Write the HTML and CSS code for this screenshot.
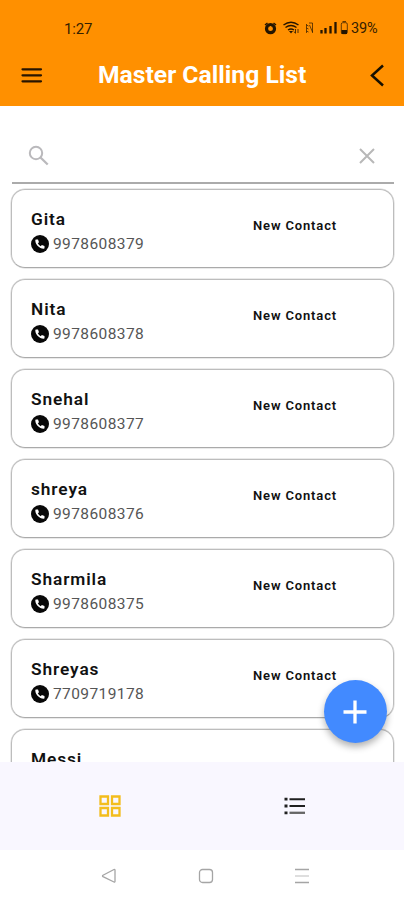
FILE: index.html
```html
<!DOCTYPE html>
<html lang="en">
<head>
<meta charset="utf-8">
<title>Master Calling List</title>
<link rel="stylesheet" href="styles.css">
</head>
<body>
<svg class="defs" aria-hidden="true">
  <symbol id="phone" viewBox="0 0 18 18">
    <circle cx="9" cy="9" r="9" fill="#080808"/>
    <path d="M5 4.500h2l1 2.700-1.200 1.100q1 2 2.900 2.900l1.200-1.200 2.600 1v2q0 .7-.8.7C8.100 13.500 4.400 9.800 4.300 5.300q0-.8.7-.8Z" fill="#fff"/>
  </symbol>
</svg>
<div class="app">
  <header>
    <div class="status">
      <span class="time">1:27</span>
      <svg width="83" height="16" viewBox="264 20 83 16" fill="none" stroke="#241500">
        <circle cx="270.500" cy="28.700" r="4" stroke-width="3.200"/>
        <path d="m265 25 2.500-2m6.000 0 2.500 2" stroke-width="1.500"/>
        <path d="M270.500 26v3h2" stroke-width="1" stroke="#ff9000"/>
        <path d="M283.500 25q7.500-5.500 15 0M285.500 27.500q5.500-4 11 0M288 30q3-2 6 0" stroke-width="1.400"/>
        <path d="m289 31 2 2.500 2-2.500Z" fill="#241500" stroke="none"/>
        <path d="M295.500 29v4m-1.500-1.500 1.500 2M298 33v-4" stroke-width=".8"/>
        <path d="M306.500 24v9m0-8 2 1m-2 2 2 1m-2 2 2 1M309 23h3.500v10m-3-8 3 7" stroke-width=".9" opacity=".75"/>
        <path d="M321.500 30v3.500M325.500 28v5.500M330.500 26v7.500M335.500 22v11.500" stroke-width="2.300"/>
        <rect x="341.300" y="22.700" width="6" height="11" rx="1.500" opacity=".7"/>
        <path d="M342.500 21.500h3.500" opacity=".7"/>
        <path d="M341.500 30h5.500v4h-5.500z" fill="#241500" stroke="none"/>
      </svg>
      <span class="battery">39%</span>
    </div>
    <div class="bar">
      <svg width="22" height="16" viewBox="0 0 22 16"><path d="M1.500 1.300H20M1.500 7.300H20M1.500 13.300H20" stroke="#281500" stroke-width="2.200" stroke-linecap="round"/></svg>
      <h1>Master Calling List</h1>
      <svg class="back" width="16" height="24" viewBox="0 0 16 24"><path d="M14 1.500 3 11.500l11 10" fill="none" stroke="#171000" stroke-width="2.500"/></svg>
    </div>
  </header>
  <div class="search">
    <svg width="22" height="22" viewBox="0 0 22 22" fill="none" stroke="#bab9bc"><circle cx="8" cy="8" r="6.200" stroke-width="2"/><path d="m12.500 12.500 7.200 7" stroke-width="2.300"/></svg>
    <svg width="18" height="18" viewBox="0 0 18 18"><path d="m2 2 14 14M16 2 2 16" stroke="#b8b8b8" stroke-width="2"/></svg>
  </div>
  <main>
    <article><div><h2>Gita</h2><p><svg><use href="#phone"/></svg>9978608379</p></div><span class="tag">New Contact</span></article>
    <article><div><h2>Nita</h2><p><svg><use href="#phone"/></svg>9978608378</p></div><span class="tag">New Contact</span></article>
    <article><div><h2>Snehal</h2><p><svg><use href="#phone"/></svg>9978608377</p></div><span class="tag">New Contact</span></article>
    <article><div><h2>shreya</h2><p><svg><use href="#phone"/></svg>9978608376</p></div><span class="tag">New Contact</span></article>
    <article><div><h2>Sharmila</h2><p><svg><use href="#phone"/></svg>9978608375</p></div><span class="tag">New Contact</span></article>
    <article><div><h2>Shreyas</h2><p><svg><use href="#phone"/></svg>7709719178</p></div><span class="tag">New Contact</span></article>
    <article><div><h2>Messi</h2></div></article>
  </main>
  <button class="fab" aria-label="Add contact"><svg width="24" height="24" viewBox="0 0 24 24"><path d="M12 .5v23M.5 12h23" stroke="#fff" stroke-width="3.300"/></svg></button>
  <nav class="tabs">
    <svg width="22" height="22" viewBox="0 0 22 22" fill="none" stroke="#f3bd1d" stroke-width="2.300"><path d="M1.500 1.500h7.500v7.500H1.500zM13 1.500h7.500v7.500H13zM1.500 13h7.500v7.500H1.500zM13 13h7.500v7.500H13z"/></svg>
    <svg width="22" height="20" viewBox="0 0 22 20" stroke="#202020"><path d="M.5 3.200h3M.5 10h3M.5 16.800h3" stroke-width="2.800"/><path d="M5.500 3.200H21M5.500 10H21" stroke-width="2.100"/><path d="M5.500 16.800H21" stroke="#666" stroke-width="2.300"/></svg>
  </nav>
  <nav class="system">
    <svg width="16" height="16" viewBox="0 0 16 16"><path d="M13 1.500 2 7.200q-1 .7 0 1.400L13 14q1 .5 1-.7V2.200q0-1.100-1-.7Z"/></svg>
    <svg width="16" height="16" viewBox="0 0 16 16"><rect x="1.500" y="1.500" width="13" height="13" rx="3"/></svg>
    <svg width="16" height="16" viewBox="0 0 16 16"><path d="M1 1.500h14M1 14.500h14"/><path d="M1 8h14" stroke="#ccc"/></svg>
  </nav>
</div>
</body>
</html>
```
FILE: styles.css
```css
* { box-sizing: border-box; }
body { margin: 0; background: #fff; font-family: Roboto, sans-serif; color: #111; }
svg { display: block; flex: none; }
.defs { position: absolute; width: 0; height: 0; }
.app { position: relative; width: 404px; height: 900px; display: flex; flex-direction: column; overflow: hidden; }
header { height: 106px; background: #ff9000; flex: none; }
.status { height: 40px; padding: 17px 26px 0 64px; display: flex; align-items: center; color: #352000; font-size: 15px; }
.time { margin-right: auto; letter-spacing: -.2px; }
.battery { width: 27px; margin-left: 4px; font-size: 14.500px; letter-spacing: -.1px; }
.status svg { overflow: visible; margin-top: -1px; }
.bar { height: 66px; padding: 4px 19px 0 21px; display: flex; align-items: center; }
h1 { margin: -1px auto 0 55px; color: #fff; font-size: 24.700px; line-height: 30px; font-weight: 700; white-space: nowrap; }
.bar svg { margin-top: 1px; }
.search { height: 78px; margin: 0 10px 0 12px; padding: 24px 18px 0 16px; border-bottom: 2px solid #ababab; display: flex; align-items: center; justify-content: space-between; flex: none; }
main { height: 578px; padding: 5px 10px 0 11px; display: flex; flex-direction: column; gap: 11px; overflow: hidden; flex: none; }
article { height: 79px; flex: none; border: 1px solid #bdbdbd; border-bottom-color: #aaa; box-shadow: 0 0 0 .5px #d5d5d5; border-radius: 14px; padding: 18px 0 0 19px; display: flex; }
article div { width: 222px; }
h2 { margin: 0; font-size: 17.300px; line-height: 22px; font-weight: 600; letter-spacing: .9px; }
article p { margin: 3px 0 0; display: flex; align-items: center; gap: 4px; height: 22px; font-size: 15.500px; letter-spacing: .4px; color: #555; }
article p svg { width: 18px; height: 18px; }
.tag { font-size: 13px; line-height: 18px; font-weight: 600; letter-spacing: .85px; padding-top: 9px; }
.fab { position: absolute; left: 323.500px; top: 680px; width: 63px; height: 63px; border: 0; padding: 0; border-radius: 50%; background: #428aff; display: grid; place-items: center; box-shadow: 0 4px 7px rgb(0 0 0 / 30%); }
.tabs { height: 88px; padding: 0 98px 0 99px; background: #f9f7ff; display: flex; align-items: center; justify-content: space-between; flex: none; }
.system { height: 50px; padding: 2px 94px 0 101px; display: flex; align-items: center; justify-content: space-between; fill: none; stroke: #a5a5a5; stroke-width: 1.300; }
```
